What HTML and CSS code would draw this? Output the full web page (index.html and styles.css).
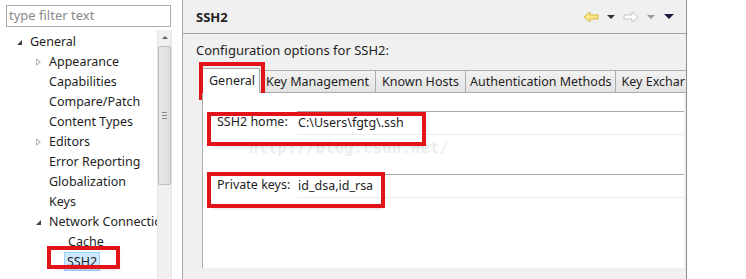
FILE: index.html
```html
<!DOCTYPE html>
<html lang="en">
<head>
  <meta charset="UTF-8">
  <title>Preferences - SSH2</title>
  <link rel="stylesheet" href="styles.css">
</head>
<body>
  <!-- Panel izquierdo: filtro y árbol -->
  <div class="sidebar">
    <div class="filter">type filter text</div>
    <div class="tree-area">
      <ul class="tree">
        <li class="lvl0"><span class="tw open"></span>General</li>
        <li class="lvl1"><span class="tw closed"></span>Appearance</li>
        <li class="lvl1">Capabilities</li>
        <li class="lvl1">Compare/Patch</li>
        <li class="lvl1">Content Types</li>
        <li class="lvl1"><span class="tw closed"></span>Editors</li>
        <li class="lvl1">Error Reporting</li>
        <li class="lvl1">Globalization</li>
        <li class="lvl1">Keys</li>
        <li class="lvl1"><span class="tw open"></span>Network Connections</li>
        <li class="lvl2">Cache</li>
        <li class="lvl2"><span class="mark tree-mark"></span><span class="sel">SSH2</span></li>
      </ul>
      <div class="vscroll">
        <div class="arrow-up"></div>
        <div class="thumb"><span class="grip"></span></div>
      </div>
    </div>
  </div>

  <!-- Panel de la página SSH2 -->
  <div class="page">
    <div class="page-head">
      <h1>SSH2</h1>
      <div class="nav">
        <svg width="16" height="12" viewBox="0 0 16 12"><path d="M1 6 L7 1 L7 4 L15 4 L15 8 L7 8 L7 11 Z" fill="#fbe88a" stroke="#d7b43c" stroke-width="1"/></svg>
        <span class="drop"></span>
        <svg width="16" height="12" viewBox="0 0 16 12"><path d="M15 6 L9 1 L9 4 L1 4 L1 8 L9 8 L9 11 Z" fill="#fff" stroke="#c4c4c4" stroke-width="1"/></svg>
        <span class="drop dim"></span>
        <span class="drop dark"></span>
      </div>
    </div>
    <p class="desc">Configuration options for SSH2:</p>
    <div class="tabs">
      <div class="tab active"><span class="mark">General</span></div>
      <div class="tab">Key Management</div>
      <div class="tab">Known Hosts</div>
      <div class="tab tight">Authentication Methods</div>
      <div class="tab last">Key Exchar</div>
    </div>
    <div class="tab-body">
      <div class="field">
        <span class="mark wide-home"></span>
        <label>SSH2 home:</label>
        <div class="input">C:\Users\fgtg\.ssh</div>
      </div>
      <div class="watermark">http://blog.csdn.net/</div>
      <div class="field">
        <span class="mark wide-keys"></span>
        <label>Private keys:</label>
        <div class="input">id_dsa,id_rsa</div>
      </div>
    </div>
  </div>
  <div class="blank"></div>
</body>
</html>
```

FILE: styles.css
```css
/* Global */
body {
  margin: 0;
  width: 746px;
  height: 279px;
  overflow: hidden;
  display: flex;
  background: #fff;
  font-family: "Noto Sans", "Open Sans", sans-serif;
  font-size: 12.5px;
  color: #1e1e1e;
}

/* Sidebar */
.sidebar {
  width: 182px;
  border-right: 1px solid #a8a8a8;
  display: flex;
  flex-direction: column;
}
.filter {
  margin: 5px 11px 0 6px;
  height: 20px;
  border: 1px solid #ababab;
  color: #8a8a8a;
  padding-left: 2px;
  line-height: 19px;
  font-size: 13px;
}
.tree-area {
  flex: 1;
  display: flex;
  margin-top: 3px;
}
.tree {
  list-style: none;
  margin: 0;
  padding: 2px 0 0 0;
  width: 157px;
  overflow: hidden;
  white-space: nowrap;
}
.tree li {
  height: 20px;
  line-height: 20px;
  position: relative;
}
.lvl0 { padding-left: 30px; }
.lvl1 { padding-left: 49px; }
.lvl2 { padding-left: 68px; }
.tw {
  position: absolute;
  top: 7px;
  width: 0;
  height: 0;
}
.lvl0 .tw { left: 17px; }
.lvl1 .tw { left: 36px; }
.tw.open {
  border-left: 5px solid transparent;
  border-bottom: 5px solid #404040;
  top: 8px;
}
.tw.closed {
  border-top: 4px solid transparent;
  border-bottom: 4px solid transparent;
  border-left: 5px solid #b8b8b8;
  top: 6px;
}
.tw.closed::after {
  content: "";
  position: absolute;
  left: -4px;
  top: -2px;
  border-top: 2px solid transparent;
  border-bottom: 2px solid transparent;
  border-left: 2px solid #fff;
}
.sel {
  background: #cde8ff;
  border: 1px solid #99d1ff;
  padding: 0 2px;
  margin-left: -4px;
}
.vscroll {
  width: 13px;
  background: #f0f0f0;
  border-left: 1px solid #e4e4e4;
  border-right: 1px solid #e4e4e4;
  margin-right: 10px;
}
.arrow-up {
  margin: 6px auto 0;
  width: 0;
  height: 0;
  border-left: 3px solid transparent;
  border-right: 3px solid transparent;
  border-bottom: 3px solid #606060;
}
.thumb {
  margin: 7px 0 0 0;
  height: 137px;
  background: linear-gradient(to right, #e8e8e8, #dcdcdc);
  border: 1px solid #bcbcbc;
  border-radius: 2px;
  display: flex;
  align-items: center;
  justify-content: center;
}
.grip {
  width: 5px;
  height: 5px;
  border-top: 1px solid #8a8a8a;
  border-bottom: 1px solid #8a8a8a;
  position: relative;
}
.grip::after {
  content: "";
  position: absolute;
  left: 0;
  right: 0;
  top: 2px;
  border-top: 1px solid #8a8a8a;
}

/* Page */
.page {
  width: 503px;
  background: #f0f0f0;
  border-right: 1px solid #8c8c8c;
  display: flex;
  flex-direction: column;
  padding-bottom: 11px;
}
.page-head {
  height: 33px;
  border-bottom: 1px solid #a5a5a5;
  display: flex;
  align-items: center;
  padding: 0 12px 0 13px;
}
.page-head h1 {
  margin: 0;
  font-size: 13px;
  font-weight: bold;
  flex: 1;
}
.nav {
  display: flex;
  align-items: center;
  gap: 8px;
}
.drop {
  width: 0;
  height: 0;
  border-left: 4px solid transparent;
  border-right: 4px solid transparent;
  border-top: 4px solid #333;
}
.drop.dim { border-top-color: #9a9a9a; }
.drop.dark { border-top-color: #1b1b40; border-left-width: 5px; border-right-width: 5px; border-top-width: 5px; margin-left: 1px; }
.desc {
  margin: 7px 0 0 13px;
  font-size: 13px;
  line-height: 18px;
}
.tabs {
  display: flex;
  align-items: flex-end;
  margin: 10px 0 0 19px;
  height: 24px;
  position: relative;
}
.tab {
  height: 21px;
  line-height: 21px;
  padding: 0 6px;
  background: linear-gradient(#f2f2f2, #e3e3e3);
  border: 1px solid #acacac;
  border-left: none;
  white-space: nowrap;
}
.tab.tight { padding: 0 3px 0 4px; }
.tab.active {
  height: 24px;
  line-height: 24px;
  background: #fff;
  border-left: 1px solid #acacac;
  border-bottom: none;
  padding: 0 4px 0 6px;
  position: relative;
}
.tab.active .mark {
  position: relative;
  padding: 6px 6px 7px 6px;
  margin: 0 -6px;
}
.tab.last {
  flex: 1;
  overflow: hidden;
  border-right: none;
}
.tab-body {
  flex: 1;
  margin: 0 2px 0 19px;
  background: #fff;
  border-left: 1px solid #acacac;
  padding: 18px 0 0 0;
  position: relative;
}
.field {
  display: flex;
  align-items: flex-start;
  height: 23px;
  margin-left: 2px;
  position: relative;
}
.field label {
  width: 80px;
  padding-left: 12px;
  line-height: 22px;
}
.input {
  flex: 1;
  height: 22px;
  border-top: 1px solid #a9a9a9;
  border-bottom: 1px solid #ececec;
  line-height: 21px;
  padding-left: 1px;
}
.watermark {
  height: 40px;
  line-height: 28px;
  padding-left: 46px;
  color: #ededed;
  font-family: "DejaVu Sans Mono", monospace;
  font-weight: bold;
  font-size: 15px;
  letter-spacing: 0.5px;
}

/* Marcas rojas */
.mark {
  outline: 4px solid #e2141a;
  box-shadow: 2px 3px 4px rgba(0,0,0,0.35);
}
.tree-mark {
  position: absolute;
  left: 51px;
  top: -2px;
  width: 65px;
  height: 15px;
}
.wide-home, .wide-keys {
  position: absolute;
  left: 6px;
}
.wide-home { width: 211px; top: 5px; height: 26px; }
.wide-keys { width: 170px; top: 2px; height: 28px; }
.blank { flex: 1; }
```
